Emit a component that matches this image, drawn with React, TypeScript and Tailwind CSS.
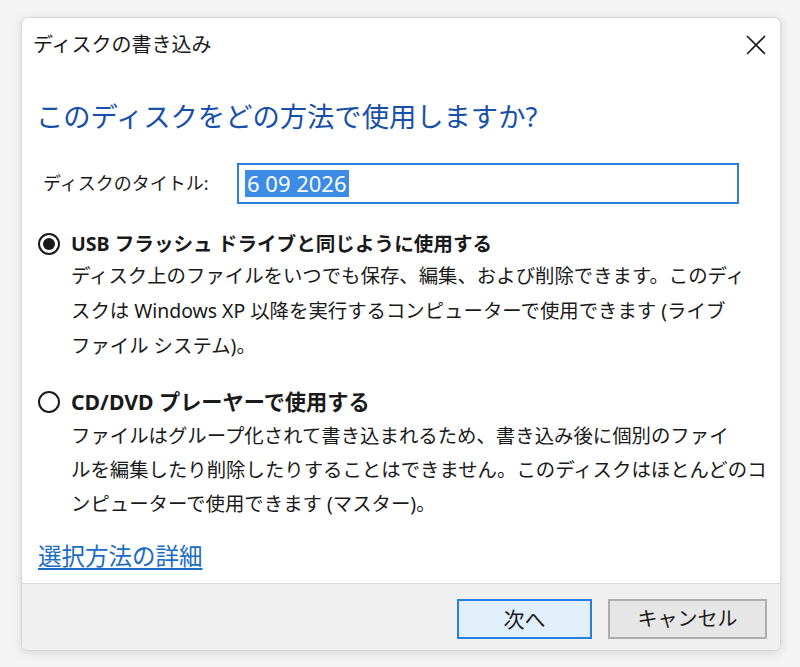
import React from 'react'

function Radio({ checked }: { checked?: boolean }) {
  return (
    <span className="flex h-[22px] w-[22px] shrink-0 items-center justify-center rounded-full border-2 border-[#1a1a1a] bg-white">
      {checked && <span className="h-[12px] w-[12px] rounded-full bg-[#1a1a1a]" />}
    </span>
  )
}

export default function App() {
  return (
    <div className="h-[667px] w-[800px] bg-[#f4f4f4] pl-[21px] pt-[17px] font-['Noto_Sans','Noto_Sans_CJK_JP',sans-serif] text-[#1a1a1a]">
      <div className="flex h-[634px] w-[760px] flex-col overflow-hidden rounded-[7px] border border-[#d6d6d6] bg-white shadow-[0_2px_10px_rgba(0,0,0,0.12)]">
        {/* title bar */}
        <div className="flex h-[54px] shrink-0 items-center justify-between pl-[11px] pr-[12px]">
          <span className="text-[20px] leading-none">ディスクの書き込み</span>
          <svg width="22" height="22" viewBox="0 0 22 22" className="mr-[1px]">
            <path d="M2 2L20 20M20 2L2 20" stroke="#1a1a1a" strokeWidth="1.6" fill="none" />
          </svg>
        </div>

        <div className="min-h-0 flex-1 pl-[14px] whitespace-nowrap">
          <h1 className="mt-[27px] text-[27.3px] font-normal leading-[36px] text-[#1750a8]">
            このディスクをどの方法で使用しますか?
          </h1>

          <div className="mt-[28px] flex items-center pl-[7px]">
            <span className="w-[194px] text-[18px]">ディスクのタイトル:</span>
            <div className="flex h-[41px] w-[502px] items-center border-2 border-[#2a7de1] pl-[6px]">
              <span className="bg-[#3c8ce6] px-[2px] text-[22px] leading-[27px] text-white">6 09 2026</span>
            </div>
          </div>

          <div className="mt-[26px] flex items-center gap-[11px] pl-[2px]">
            <Radio checked />
            <span className="text-[19.6px] font-bold leading-[28px]">USB フラッシュ ドライブと同じように使用する</span>
          </div>
          <p className="pl-[35px] text-[19.4px] leading-[35px]">
            ディスク上のファイルをいつでも保存、編集、および削除できます。このディ
            <br />
            スクは Windows XP 以降を実行するコンピューターで使用できます (ライブ
            <br />
            ファイル システム)。
          </p>

          <div className="mt-[25px] flex items-center gap-[11px] pl-[2px]">
            <Radio />
            <span className="text-[21.2px] font-bold leading-[28px]">CD/DVD プレーヤーで使用する</span>
          </div>
          <p className="mt-[3px] pl-[35px] text-[19.4px] leading-[34px]">
            ファイルはグループ化されて書き込まれるため、書き込み後に個別のファイ
            <br />
            ルを編集したり削除したりすることはできません。このディスクはほとんどのコ
            <br />
            ンピューターで使用できます (マスター)。
          </p>

          <a href="#" className="mt-[20px] inline-block pl-[2px] text-[23.5px] leading-[30px] text-[#1a6cc4] underline underline-offset-[3px]">
            選択方法の詳細
          </a>
        </div>

        {/* footer */}
        <div className="flex h-[67px] shrink-0 items-start justify-end gap-[16px] border-t border-[#d9d9d9] bg-[#f0f0f0] pr-[13px] pt-[15px]">
          <button className="h-[40px] w-[135px] border-2 border-[#2a7de1] bg-[#e1effb] text-[21px] leading-none">次へ</button>
          <button className="h-[40px] w-[159px] border-2 border-[#adadad] bg-[#e6e6e6] text-[20px] leading-none">キャンセル</button>
        </div>
      </div>
    </div>
  )
}
